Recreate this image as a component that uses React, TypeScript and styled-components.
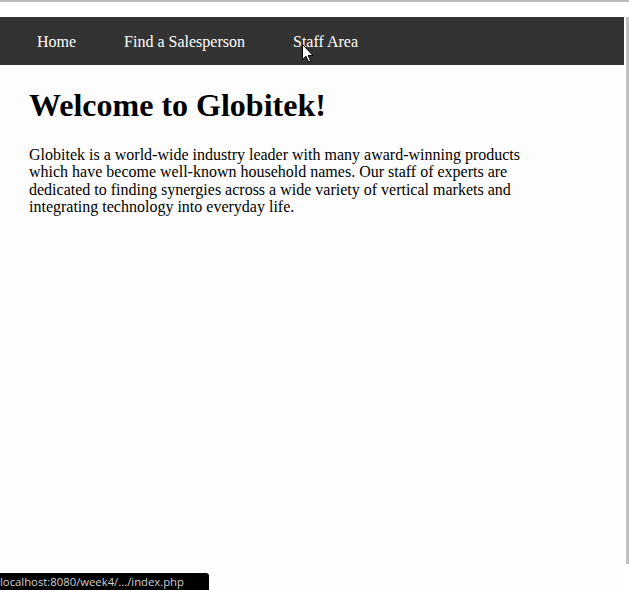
import React from "react";
import styled, { createGlobalStyle } from "styled-components";

const Global = createGlobalStyle`
  html, body { margin: 0; padding: 0; background: #ffffff; }
  body { font-family: "Liberation Serif", "Times New Roman", serif; color: #000; }
  #root { position: relative; width: 629px; height: 590px; overflow: hidden; }
`;

const Page = styled.div`
  display: flex;
  flex-direction: column;
  height: 590px;
`;

const TopRule = styled.div`
  height: 2px;
  background: #bdbdbd;
`;

const Gap = styled.div`
  height: 15px;
  background: #ffffff;
`;

const Window = styled.div`
  display: flex;
  flex: 1;
  align-items: flex-start;
`;

const Main = styled.div`
  width: 624px;
  display: flex;
  flex-direction: column;
  background: #fdfdfd;
  height: 573px;
`;

const Scrollbar = styled.div`
  width: 3px;
  height: 547px;
  margin-left: 2px;
  background: #c1c1c1;
`;

const Nav = styled.nav`
  height: 48px;
  background: #333333;
  display: flex;
  align-items: center;
  padding-left: 13px;
`;

const NavLink = styled.a`
  color: #ffffff;
  text-decoration: none;
  font-size: 16px;
  line-height: 18px;
  padding: 0 24px;
  margin-top: 2px;
`;

const Content = styled.main`
  padding: 0 29px;
`;

const Title = styled.h1`
  font-size: 32px;
  font-weight: bold;
  margin: 22px 0 0;
  line-height: 37px;
`;

const Intro = styled.p`
  font-size: 16px;
  line-height: 17.4px;
  max-width: 505px;
  margin: 22px 0 0;
`;

const Status = styled.div`
  position: absolute;
  left: 0;
  bottom: 0;
  width: 209px;
  height: 17px;
  background: #000;
  border-top-right-radius: 3px;
  color: #cfcfcf;
  font-family: "Open Sans", "Noto Sans", sans-serif;
  font-size: 11.3px;
  line-height: 18px;
  white-space: nowrap;
  overflow: hidden;
`;

const Cursor = styled.svg`
  position: absolute;
  left: 302px;
  top: 44px;
  width: 12px;
  height: 19px;
  pointer-events: none;
`;

export default function App() {
  return (
    <>
      <Global />
      <Page>
        <TopRule />
        <Gap />
        <Window>
          <Main>
            <Nav>
              <NavLink href="#">Home</NavLink>
              <NavLink href="#">Find a Salesperson</NavLink>
              <NavLink href="#">Staff Area</NavLink>
            </Nav>
            <Content>
              <Title>Welcome to Globitek!</Title>
              <Intro>
                Globitek is a world-wide industry leader with many award-winning
                products which have become well-known household names. Our staff of
                experts are dedicated to finding synergies across a wide variety of
                vertical markets and integrating technology into everyday life.
              </Intro>
            </Content>
          </Main>
          <Scrollbar />
        </Window>
      </Page>
      <Cursor viewBox="0 0 12 19">
        <path
          d="M0.5 0.5 L0.5 15.5 L4 12.2 L6.5 18 L8.6 17.1 L6.2 11.5 L11 11.5 Z"
          fill="#ffffff"
          stroke="#000000"
          strokeWidth="1"
          strokeLinejoin="miter"
        />
      </Cursor>
      <Status>localhost:8080/week4/.../index.php</Status>
    </>
  );
}
